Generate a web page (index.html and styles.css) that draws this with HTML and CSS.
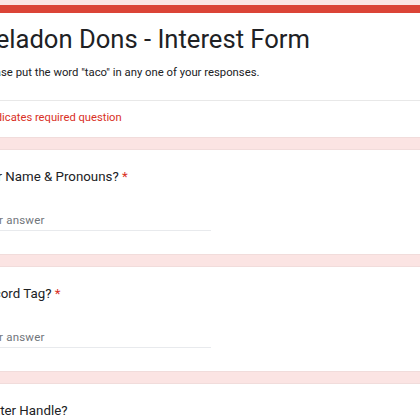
FILE: index.html
```html
<!DOCTYPE html>
<html>
<head>
<meta charset="utf-8">
<link rel="stylesheet" href="styles.css">
</head>
<body>
<div class="form">
  <div class="card header">
    <div class="head-main">
      <div class="title">Celadon Dons - Interest Form</div>
      <div class="desc">Please put the word "taco" in any one of your responses.</div>
    </div>
    <div class="required-note">* Indicates required question</div>
  </div>
  <div class="card question">
    <div class="q-title">Your Name &amp; Pronouns? <span class="star">*</span></div>
    <div class="input"><span class="placeholder">Your answer</span></div>
  </div>
  <div class="card question">
    <div class="q-title">Discord Tag? <span class="star">*</span></div>
    <div class="input"><span class="placeholder">Your answer</span></div>
  </div>
  <div class="card question">
    <div class="q-title">Twitter Handle?</div>
    <div class="input"><span class="placeholder">Your answer</span></div>
  </div>
</div>
</body>
</html>
```
FILE: styles.css
```css
html, body {
  margin: 0;
  padding: 0;
  overflow: hidden;
  background: #fbe4e3;
}
body {
  font-family: Roboto, "Liberation Sans", sans-serif;
  color: #202124;
}
.form {
  margin-left: -46px;
  width: 700px;
  padding-top: 5px;
  display: flex;
  flex-direction: column;
  gap: 11px;
}
.card {
  background: #fff;
  border: 1px solid #f1dcdb;
  border-radius: 8px;
  box-sizing: border-box;
}
.header {
  border-top: 8px solid #db4437;
  height: 133px;
}
.head-main {
  padding: 10px 24px 18px;
  border-bottom: 1px solid #e8e8e8;
}
.title {
  font-size: 25.6px;
  line-height: 32px;
  color: #202124;
}
.desc {
  margin-top: 9px;
  font-size: 11.3px;
  line-height: 18px;
  color: #202124;
}
.required-note {
  padding: 8px 24px 0;
  font-size: 11.2px;
  line-height: 18px;
  color: #d93025;
}
.question {
  height: 106px;
  padding: 15px 24px 0 20px;
}
.q-title {
  font-size: 13.3px;
  line-height: 24px;
  color: #202124;
}
.star {
  color: #d93025;
}
.input {
  margin-top: 20px;
  margin-left: 4px;
  width: 232px;
  height: 22px;
  box-sizing: border-box;
  border-bottom: 1px solid #e8eaed;
  font-size: 11.5px;
  line-height: 22px;
}
.placeholder {
  color: #70757a;
  letter-spacing: 0.2px;
}
```
